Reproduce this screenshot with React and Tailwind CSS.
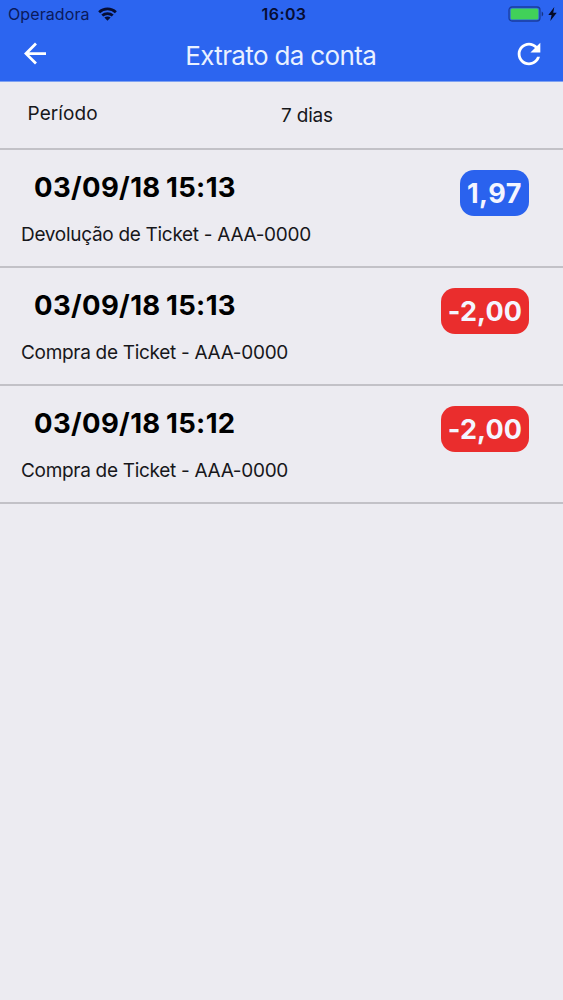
import React from 'react';

const entries = [
  { id: 1, date: '03/09/18 15:13', description: 'Devolução de Ticket - AAA-0000', amount: '1,97', credit: true },
  { id: 2, date: '03/09/18 15:13', description: 'Compra de Ticket - AAA-0000', amount: '-2,00', credit: false },
  { id: 3, date: '03/09/18 15:12', description: 'Compra de Ticket - AAA-0000', amount: '-2,00', credit: false },
];

function StatusBar() {
  return (
    <div className="grid grid-cols-3 items-center h-7 pl-2 pr-[6px] text-[#0a1a5c]">
      <div className="flex items-center gap-2">
        <span className="text-[16px] leading-7 tracking-[0.1px]">Operadora</span>
        <svg width="19" height="14" viewBox="0 0 20 14" fill="none" stroke="#060d33" strokeWidth="2.9">
          <path d="M1.2 5.2C6.1.5 13.9.5 18.8 5.2" />
          <path d="M4.5 8.7c3.1-2.9 7.9-2.9 11 0" />
          <path d="M10 14l-3.3-3.2c1.9-1.5 4.7-1.5 6.6 0z" fill="#060d33" stroke="none" />
        </svg>
      </div>
      <span className="pl-[3px] text-center text-[16px] leading-7 font-semibold tracking-[0.4px] text-[#060d33]">16:03</span>
      <div className="flex items-center justify-end gap-1">
        <svg width="36" height="16" viewBox="0 0 36 16">
          <rect x="1" y="1" width="31" height="14" rx="3" fill="#2c64ec" stroke="#1a3d9e" strokeWidth="1.3" />
          <rect x="2.6" y="2.6" width="27.8" height="10.8" rx="1.5" fill="#41d159" />
          <path d="M33.7 5.5c2 .8 2 4.2 0 5z" fill="#163482" />
        </svg>
        <svg width="9" height="14" viewBox="0 0 9 14" fill="#050a26">
          <path d="M6.3 0L.3 8h3.3L2.3 14l6.4-8.3H5.2z" />
        </svg>
      </div>
    </div>
  );
}

function Header() {
  return (
    <header className="h-[82px] bg-[#2c65f0] border-b border-[#7fa2f2]">
      <StatusBar />
      <div className="flex items-center justify-between h-[51px] pl-[17.5px] pr-[17px] text-white">
        <button type="button" aria-label="Voltar">
          <svg className="block" width="34" height="33" viewBox="0 0 24 24" fill="currentColor">
            <path d="M20 11H7.83l5.59-5.59L12 4l-8 8 8 8 1.41-1.41L7.83 13H20v-2z" />
          </svg>
        </button>
        <h1 className="pt-1 pr-[2px] text-[26px] leading-8 tracking-[-0.65px] text-[#e9f1ff]">Extrato da conta</h1>
        <button type="button" aria-label="Atualizar">
          <svg className="block" width="34" height="34" viewBox="0 0 24 24" fill="currentColor">
            <path d="M17.65 6.35C16.2 4.9 14.21 4 12 4c-4.42 0-7.99 3.58-7.99 8s3.57 8 7.99 8c3.73 0 6.84-2.55 7.73-6h-2.08c-.82 2.33-3.04 4-5.65 4-3.31 0-6-2.69-6-6s2.69-6 6-6c1.66 0 3.14.69 4.22 1.78L13 11h7V4l-2.35 2.35z" />
          </svg>
        </button>
      </div>
    </header>
  );
}

function Entry({ entry }) {
  return (
    <li className="h-[118px] flex items-start justify-between pr-[34px] border-b-2 border-[#c2c1c7]">
      <div>
        <p className="pl-[34px] pt-[21px] text-[27.5px] leading-8 font-bold tracking-[0.35px] [word-spacing:-1.5px] text-black">{entry.date}</p>
        <p className="pl-[21px] pt-[20px] text-[19px] leading-6 tracking-[-0.3px] text-[#17171b]">{entry.description}</p>
      </div>
      <span
        className={`mt-5 h-[46px] px-[7px] pt-px rounded-[14px] text-[27px] leading-[46px] font-bold text-[#f4f5ff] ${
          entry.credit ? 'bg-[#2a62ee] tracking-[0.5px]' : 'bg-[#ea2d2d] tracking-[0.1px]'
        }`}
      >
        {entry.amount}
      </span>
    </li>
  );
}

export default function App() {
  return (
    <div className="w-[563px] h-[1000px] overflow-hidden bg-[#ecebf1] font-['Inter','Liberation_Sans',sans-serif]">
      <Header />
      <div className="flex h-[68px] border-b-2 border-[#c2c1c7] text-[19px] leading-6 text-[#17171b]">
        <span className="w-[281px] pl-[27.5px] pt-5 tracking-[0.1px]">Período</span>
        <span className="pt-[22px] tracking-[-0.2px]">7 dias</span>
      </div>
      <ul>
        {entries.map((entry) => (
          <Entry key={entry.id} entry={entry} />
        ))}
      </ul>
    </div>
  );
}
